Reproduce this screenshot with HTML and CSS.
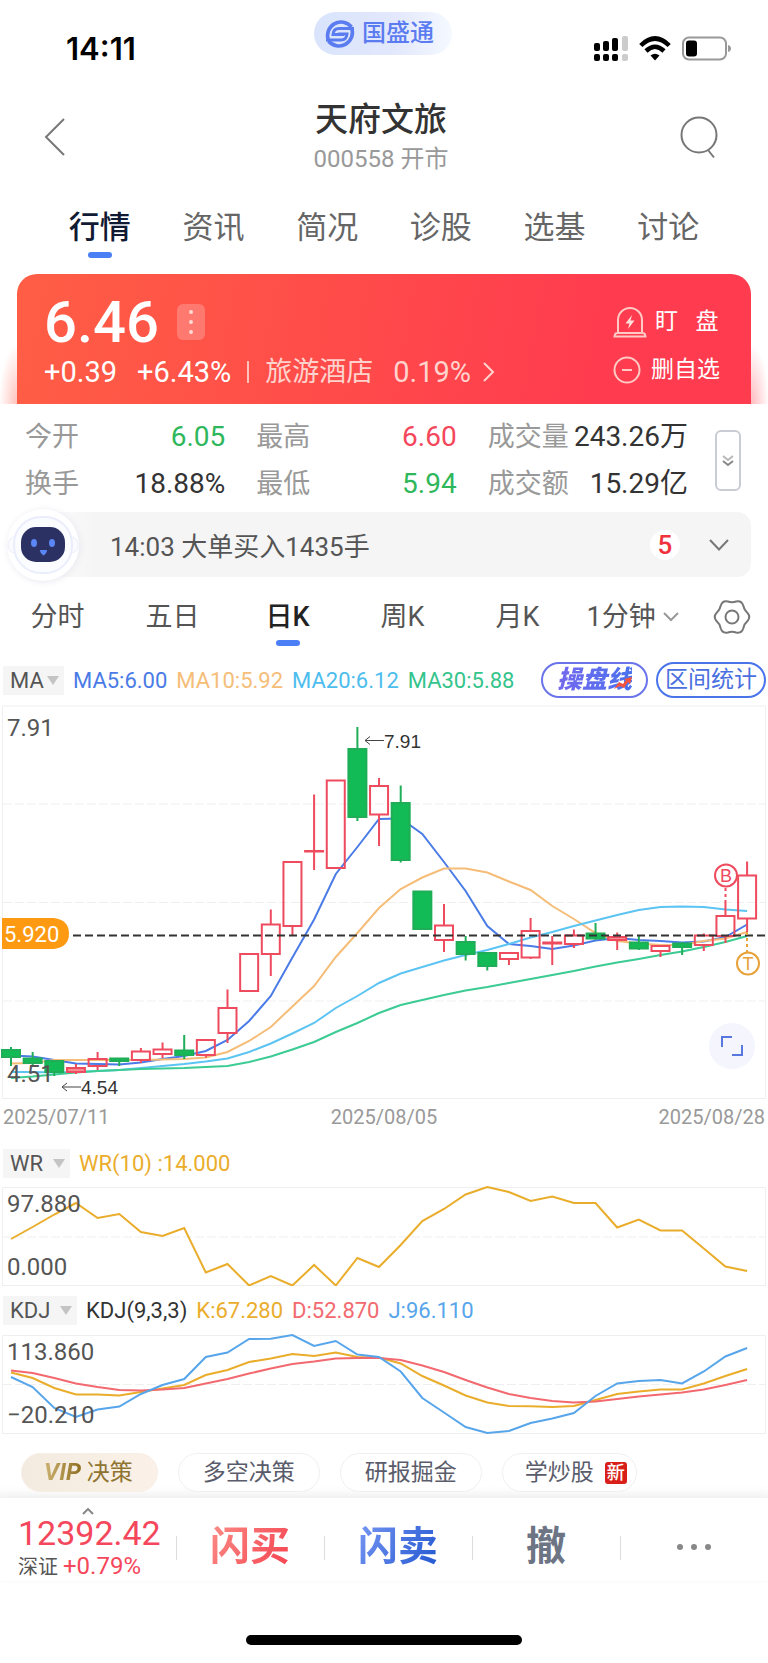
FILE: index.html
```html
<!DOCTYPE html>
<html lang="zh-CN">
  <head>
    <meta charset="utf-8" />
    <meta name="viewport" content="width=device-width, initial-scale=1" />
    <title>天府文旅 000558</title>
    <link rel="stylesheet" href="styles.css">
  </head>
  <body>
    <div class="status-bar">
      <span class="time">14:11</span>
      <div class="app-pill">
        <svg width="32" height="32" viewBox="0 0 32 32" fill="none" stroke="#5b7cf0">
          <path d="M4.500 22.500A13.500 13.500 0 0 1 27.500 9" stroke-width="3.600" />
          <path d="M27.500 9.500A13.500 13.500 0 0 1 4.500 23" stroke-width="3.600" />
          <path d="M30 10.500H15Q9.500 10.500 9 16.500H20" stroke-width="3" />
          <path d="M2 22H17Q22.500 22 23 16H14" stroke-width="3" />
        </svg>
        <span>国盛通</span>
      </div>
      <div class="status-icons">
        <svg width="34" height="26" viewBox="0 0 34 26">
          <rect x="0" y="7" width="6" height="8" rx="2" />
          <rect x="9" y="5" width="6" height="10" rx="2" />
          <rect x="18" y="2" width="6" height="13" rx="2" />
          <rect x="28" y="0" width="6" height="15" rx="2" fill="#ccc" />
          <rect x="0" y="18" width="6" height="7" rx="2" />
          <rect x="9" y="18" width="6" height="7" rx="2" />
          <rect x="18" y="18" width="6" height="7" rx="2" />
          <rect x="28" y="18" width="6" height="7" rx="2" fill="#ccc" />
        </svg>
        <svg width="32" height="26" viewBox="0 0 32 26" fill="none" stroke="#000" stroke-width="4.500">
          <path d="M1.800 9.500Q16-4.500 30.200 9.500" />
          <path d="M7 15Q16 6.500 25 15" />
          <path d="M16 24.500L11.500 19.500Q16 16 20.500 19.500Z" fill="#000" stroke="none" />
        </svg>
        <svg width="50" height="26" viewBox="0 0 50 26">
          <rect x="1" y="1.500" width="43" height="22" rx="6" fill="none" stroke="#999" stroke-width="2" />
          <rect x="4" y="4.500" width="11" height="16" rx="3" />
          <path d="M46 9Q49 10 49 12.500T46 16Z" fill="#999" />
        </svg>
      </div>
    </div>

    <header class="header">
      <button class="icon-btn back" aria-label="返回">
        <svg width="22" height="40" viewBox="0 0 22 40"><path d="M20 2L2 20L20 38" /></svg>
      </button>
      <div class="stock">
        <h1>天府文旅</h1>
        <p>000558 开市</p>
      </div>
      <button class="icon-btn search" aria-label="搜索">
        <svg width="38" height="44" viewBox="0 0 38 44"><circle cx="19" cy="20" r="17.500" /><path d="M28 35L34 42.500" /></svg>
      </button>
    </header>

    <nav class="tabs">
      <a href="#" class="active">行情</a>
      <a href="#">资讯</a>
      <a href="#">简况</a>
      <a href="#">诊股</a>
      <a href="#">选基</a>
      <a href="#">讨论</a>
    </nav>

    <section class="price-wrap">
      <div class="price-card">
        <div>
          <div class="price">
            <strong>6.46</strong>
            <button class="more-dots" aria-label="更多">
              <svg width="4" height="24" viewBox="0 0 4 24" fill="#ffd9d3"><circle cx="2" cy="2" r="2" /><circle cx="2" cy="12" r="2" /><circle cx="2" cy="22" r="2" /></svg>
            </button>
          </div>
          <div class="change">
            <span>+0.39</span>
            <span>+6.43%</span>
            <i></i>
            <a href="#" class="sector">
              <span>旅游酒店</span>
              <span>0.19%</span>
              <svg width="12" height="20" viewBox="0 0 12 20"><path d="M1 1L10 10L1 19" /></svg>
            </a>
          </div>
        </div>
        <div class="actions">
          <button>
            <svg width="34" height="32" viewBox="0 0 34 32"><path d="M5 27V14A12 12 0 0 1 29 14V27M4 27H30Q32 27 32.500 30.500H1.500Q2 27 4 27Z" /><path d="M19 9L12.500 17.500H16.500L15 23L21.500 14.500H17.500Z" fill="#ffe1dc" stroke="none" /></svg>
            <span>盯&ensp; 盘</span>
          </button>
          <button>
            <svg width="28" height="28" viewBox="0 0 28 28"><circle cx="14" cy="14" r="12.500" /><path d="M9 14H19" /></svg>
            <span>删自选</span>
          </button>
        </div>
      </div>
    </section>

    <section class="stats">
      <dl>
        <div><dt>今开</dt><dd class="down">6.05</dd></div>
        <div><dt>最高</dt><dd class="up">6.60</dd></div>
        <div><dt>成交量</dt><dd>243.26万</dd></div>
        <div><dt>换手</dt><dd>18.88%</dd></div>
        <div><dt>最低</dt><dd class="down">5.94</dd></div>
        <div><dt>成交额</dt><dd>15.29亿</dd></div>
      </dl>
      <button class="expand" aria-label="展开">
        <svg width="12" height="14" viewBox="0 0 12 14"><path d="M1 2L6 6L11 2" opacity=".6" /><path d="M1 7L6 11L11 7" /></svg>
      </button>
    </section>

    <section class="alert">
      <svg class="robot" width="74" height="74" viewBox="0 0 74 74">
        <circle cx="37" cy="37" r="36" fill="#fff" />
        <rect x="2" y="29" width="70" height="16" rx="7" fill="#fafaff" stroke="#eeeefb" />
        <rect x="8" y="9" width="58" height="56" rx="27" fill="#fbfcff" stroke="#eaedfc" stroke-width="2" />
        <rect x="15" y="19" width="44" height="35" rx="15" fill="#2c3163" />
        <ellipse cx="28" cy="35" rx="3" ry="4" fill="#5b86f5" />
        <ellipse cx="46" cy="35" rx="3" ry="4" fill="#5b86f5" />
        <path d="M34 42H41Q41 45 37.500 47.500Q34 45 34 42Z" fill="#5b86f5" />
      </svg>
      <p>14:03 大单买入1435手</p>
      <span class="count">5</span>
      <button class="icon-btn" aria-label="展开消息">
        <svg width="20" height="12" viewBox="0 0 20 12"><path d="M1 1L10 10.500L19 1" /></svg>
      </button>
    </section>

    <nav class="periods">
      <a href="#">分时</a>
      <a href="#">五日</a>
      <a href="#" class="active">日K</a>
      <a href="#">周K</a>
      <a href="#">月K</a>
      <span class="minute">
        <select aria-label="分钟周期"><option>1分钟</option></select>
        <svg width="16" height="10" viewBox="0 0 16 10"><path d="M1 1L8 8L15 1" /></svg>
      </span>
      <button class="icon-btn gear" aria-label="设置">
        <svg width="40" height="40" viewBox="0 0 40 40">
          <path d="M35.500 15.900Q39 20 35.500 24.100Q32.100 27 31.300 31.300Q29.500 36.900 24.100 35.500Q20 34 15.900 35.500Q10.500 36.900 8.700 31.300Q7.900 27 4.500 24.100Q1 20 4.500 15.900Q7.900 13 8.700 8.700Q10.500 3.100 15.900 4.500Q20 6 24.100 4.500Q29.500 3.100 31.300 8.700Q32.100 13 35.500 15.900Z" />
          <circle cx="20" cy="20" r="6.500" />
        </svg>
      </button>
    </nav>

    <div class="legend ma-row">
      <span class="picker ma"><select aria-label="主图指标"><option>MA</option></select></span>
      <span class="ma5">MA5:6.00</span>
      <span class="ma10">MA10:5.92</span>
      <span class="ma20">MA20:6.12</span>
      <span class="ma30">MA30:5.88</span>
      <div class="chart-btns">
        <button class="trade-line">
          <span>操盘线</span>
          <svg width="18" height="12" viewBox="0 0 18 12"><path d="M0 12L5 5L9 7L12 3L10 2L18 0L16 7L14 5L10 11L6 9Z" /></svg>
        </button>
        <button>区间统计</button>
      </div>
    </div>

    <div class="chart-box">
      <svg class="chart" viewBox="0 0 768 400">
        <g class="grid">
          <path d="M2.500 6H765.500V398.500H2.500Z" />
          <path d="M3 104H765M3 202.500H765M3 301H765" stroke-dasharray="9 3" />
        </g>
        <g id="ma-lines"></g>
        <g id="candles"></g>
        <path d="M73 235.500H766" stroke="#333" stroke-width="2" stroke-dasharray="8 4" />
        <path d="M2 218H54Q69 220 69 233.500T54 249H2Z" fill="#fd9a12" />
        <text class="tag" x="4" y="242">5.920</text>
        <text class="axis" x="7" y="36">7.91</text>
        <text class="axis" x="7" y="382">4.51</text>
        <g class="arrow">
          <path d="M384 40.500H365M370 36.500L365 40.500L370 44.500" />
          <path d="M81 387H62M67 383L62 387L67 391" />
        </g>
        <text class="note" x="384" y="48">7.91</text>
        <text class="note" x="81" y="394">4.54</text>
        <g class="mark buy">
          <path d="M725.500 188V202" stroke-dasharray="3 3" />
          <circle cx="726" cy="175.500" r="11" />
          <text x="726" y="182">B</text>
        </g>
        <g class="mark trade">
          <path d="M747 232V252" stroke-dasharray="3 3" />
          <circle cx="748" cy="263.500" r="11" />
          <text x="748" y="270">T</text>
        </g>
      </svg>
      <button class="fullscreen" aria-label="全屏">
        <svg width="22" height="20" viewBox="0 0 22 20"><path d="M1 11V1H11M11 19H21V9" /></svg>
      </button>
    </div>
    <div class="dates"><span>2025/07/11</span><span>2025/08/05</span><span>2025/08/28</span></div>

    <div class="legend wr-row">
      <span class="picker"><select aria-label="副图指标一"><option>WR</option></select></span>
      <span class="k">WR(10) :14.000</span>
    </div>
    <svg class="chart" viewBox="0 56 768 100">
      <path class="grid" d="M2.500 57.500H765.500V155.500H2.500Z" />
      <path class="grid" d="M3 107H765" stroke-dasharray="9 3" />
      <g id="wr-lines"></g>
      <text class="axis" x="7" y="82">97.880</text>
      <text class="axis" x="7" y="145">0.000</text>
    </svg>

    <div class="legend kdj-row">
      <span class="picker"><select aria-label="副图指标二"><option>KDJ</option></select></span>
      <span>KDJ(9,3,3)</span>
      <span class="k">K:67.280</span>
      <span class="d">D:52.870</span>
      <span class="j">J:96.110</span>
    </div>
    <svg class="chart" viewBox="0 203 768 102">
      <path class="grid" d="M2.500 205.500H765.500V303.500H2.500Z" />
      <path class="grid" d="M3 254.500H765" stroke-dasharray="9 3" />
      <g id="kdj-lines"></g>
      <text class="axis" x="7" y="230">113.860</text>
      <text class="axis" x="7" y="293">−20.210</text>
    </svg>

    <div class="tools">
      <a href="#" class="vip"><b>VIP</b> 决策</a>
      <a href="#">多空决策</a>
      <a href="#">研报掘金</a>
      <a href="#" class="learn">学炒股 <em>新</em></a>
    </div>

    <footer class="trade-bar">
      <a href="#" class="index">
        <svg width="12" height="7" viewBox="0 0 12 7"><path d="M1 6L6 1L11 6" /></svg>
        <strong>12392.42</strong>
        <span>深证 <b>+0.79%</b></span>
      </a>
      <button class="buy-btn"><span>闪买</span></button>
      <button class="sell-btn"><span>闪卖</span></button>
      <button class="cancel-btn"><span>撤</span></button>
      <button aria-label="更多">
        <svg width="34" height="6" viewBox="0 0 34 6" fill="#888"><circle cx="3" cy="3" r="3" /><circle cx="17" cy="3" r="3" /><circle cx="31" cy="3" r="3" /></svg>
      </button>
    </footer>
    <div class="home-bar"></div>

    <script>
      var START = 11;
      var STEP = 21.65;

      // [type, high, body top, body bottom, low], g = down, r = up, s = filled up
      var candles = [
        ["g", 347, 350, 357, 366], ["g", 352, 358.5, 363, 365], ["g", 361, 361, 372, 376],
        ["s", 364, 368, 372, 374], ["r", 352, 359, 366, 370], ["g", 358, 358.5, 361, 366],
        ["r", 348, 351.5, 360, 363], ["r", 342.5, 349.5, 354, 358], ["g", 335, 350.5, 355, 359],
        ["r", 340, 340, 355, 357.5], ["r", 289.5, 308, 333, 343], ["r", 254, 254, 291, 291],
        ["r", 209.5, 224.5, 254, 276], ["r", 162, 162, 226, 236], ["r", 94.5, 151, 151.5, 170],
        ["r", 80.5, 80.5, 168, 168], ["g", 27, 49, 117, 121], ["r", 78, 86, 114.5, 146],
        ["g", 85.5, 103, 160, 162.5], ["g", 191.5, 191.5, 229, 229], ["r", 204, 225.5, 240, 252],
        ["g", 236, 242, 254, 260.5], ["g", 252, 253, 266, 270.5], ["r", 253, 253, 259, 265],
        ["r", 218, 231, 257.5, 259], ["r", 236, 242.5, 243.5, 265], ["r", 229.5, 235.5, 244, 248],
        ["g", 223, 233.5, 238.5, 240], ["s", 232.5, 237, 240, 250], ["g", 236, 242.5, 248.5, 250],
        ["r", 246, 246, 251, 257], ["g", 242, 243.5, 247, 255], ["r", 233.5, 235.5, 245, 251],
        ["r", 202, 216, 236, 243], ["r", 161.5, 175.5, 218.5, 232]
      ];

      var ma5 = [355.5, 356.5, 360, 363.5, 364, 364.5, 362.5, 359, 356, 351, 340, 321, 296, 257.5, 219.5, 174, 147, 119, 118.5, 134, 162, 191, 226, 244, 246, 249, 245.5, 240.5, 238, 240, 241, 242.5, 241.5, 237, 224.5];
      var ma10 = [363.5, 363, 360, 360, 360, 360, 360, 359.5, 359, 357.5, 352, 341, 327, 306.5, 286, 257, 233, 208, 189, 177.5, 168.5, 168.5, 172.5, 181.5, 190, 206, 219, 233, 241, 243.5, 245, 245, 241, 238.5, 232];
      var ma20 = [372, 372, 372.5, 372, 371, 370, 368, 366, 364, 361.5, 358.5, 352, 343.5, 333.5, 323, 308, 296, 283, 273.5, 267, 260.5, 255, 250, 244, 237.5, 232, 226, 220.5, 215, 210, 207, 206.5, 207, 209.5, 211];
      var ma30 = [378, 376.5, 374.5, 372.5, 371, 370, 369, 368.5, 368, 367, 366, 362, 356.5, 349.5, 342, 332, 323, 313, 305, 300, 295, 290.5, 287, 283, 279, 275, 271, 266.5, 262.5, 259, 255, 251.5, 247, 242, 236];
      var wr = [109, 97, 84.5, 73, 88, 84, 102, 106, 98, 142.5, 134, 155.5, 146, 155.5, 135, 155.5, 128, 137, 115, 91, 79, 64.5, 57, 62, 71, 66.5, 73, 73, 97.5, 89.5, 100.5, 100.5, 118.5, 136.5, 141];
      var k = [242.5, 248, 258, 264.5, 264.5, 265.5, 262, 258.5, 255, 245, 240, 232, 228.5, 224, 226, 222.5, 227, 227.5, 233.5, 246, 255.5, 265.5, 272.5, 276, 276.3, 277, 276, 270, 264, 261.5, 259.5, 259.5, 253.5, 246, 239];
      var d = [240.5, 243, 248, 253.5, 257, 260, 260.5, 259.5, 258, 253.5, 249, 243.5, 238.5, 234, 231.5, 228.5, 228, 228, 230, 235.5, 242, 250, 257.5, 264, 268, 271, 272.5, 271.5, 269, 266.5, 264.5, 262.5, 259.5, 255, 250];
      var j = [247, 257, 278, 287, 279.5, 276.5, 264, 255, 249, 227, 222.5, 209, 208.7, 205, 216, 211, 224.5, 227, 241.5, 268, 282.5, 297, 303, 301, 293, 288.5, 283, 266, 253.5, 251, 250, 253.5, 241.5, 226.5, 218];

      function add(parent, tag, attrs) {
        var el = document.createElementNS("http://www.w3.org/2000/svg", tag);
        for (var name in attrs) {
          el.setAttribute(name, attrs[name]);
        }
        document.getElementById(parent).appendChild(el);
      }

      function line(parent, values, color) {
        var points = values.map(function (y, i) {
          return (START + i * STEP).toFixed(1) + "," + y;
        });
        add(parent, "polyline", { points: points.join(" "), stroke: color });
      }

      line("ma-lines", ma5, "#4a7be6");
      line("ma-lines", ma10, "#f5bd78");
      line("ma-lines", ma20, "#5cc4f2");
      line("ma-lines", ma30, "#3bcb93");
      line("wr-lines", wr, "#eaad2b");
      line("kdj-lines", k, "#eaad2b");
      line("kdj-lines", d, "#f2696f");
      line("kdj-lines", j, "#57a5ea");

      candles.forEach(function (c, i) {
        var x = START + i * STEP;
        add("candles", "path", {
          class: "candle-" + c[0],
          d: "M" + x + " " + c[1] + "V" + c[2] + "M" + x + " " + c[3] + "V" + c[4] +
            "M" + (x - 9) + " " + c[2] + "H" + (x + 9) + "V" + c[3] + "H" + (x - 9) + "Z"
        });
      });
    </script>
  </body>
</html>
```
FILE: styles.css
```css
* {
  box-sizing: border-box;
}

body {
  margin: 0;
  background: #fff;
  color: #333;
  font-family: Roboto, "Noto Sans CJK SC", sans-serif;
  font-size: 22px;
}

h1, p, dl, dd {
  margin: 0;
}

a {
  color: inherit;
  text-decoration: none;
}

button, select {
  padding: 0;
  border: none;
  background: none;
  color: inherit;
  font: inherit;
  cursor: pointer;
}

select {
  appearance: none;
}

svg {
  display: block;
  flex: none;
}

.status-bar {
  display: grid;
  grid-template-columns: 1fr auto 1fr;
  align-items: start;
  padding: 12px 36px 5px 66px;
}

.time {
  padding-top: 19px;
  color: #000;
  font-family: Inter, sans-serif;
  font-size: 31px;
  font-weight: 600;
  line-height: 36px;
}

.app-pill {
  display: flex;
  align-items: center;
  gap: 6px;
  margin-right: 32px;
  padding: 0 18px 0 10px;
  border-radius: 22px;
  background: linear-gradient(90deg, #d9e4fc, #e3e8fc 60%, #f5f9ff);
  color: #5b7cf0;
  font-size: 24px;
  font-weight: 500;
  line-height: 43px;
}

.status-icons {
  display: flex;
  justify-content: flex-end;
  gap: 11px;
  padding-top: 24px;
}

.header {
  display: grid;
  grid-template-columns: 1fr auto 1fr;
  align-items: center;
  padding: 28px 50px 0 44px;
}

.icon-btn svg {
  fill: none;
  stroke: #777;
  stroke-width: 2;
}

.back {
  justify-self: start;
}

.search {
  justify-self: end;
}

.stock {
  text-align: center;
}

.stock h1 {
  font-size: 33px;
  font-weight: 500;
  line-height: 40px;
}

.stock p {
  margin-top: 4px;
  color: #999;
  font-size: 24px;
  line-height: 30px;
}

.tabs {
  display: grid;
  grid-template-columns: repeat(6, 1fr);
  margin-top: 34px;
  padding: 0 43px;
  color: #666;
  font-size: 31px;
  line-height: 40px;
  text-align: center;
}

.tabs a {
  position: relative;
  padding-bottom: 10px;
}

.tabs .active {
  color: #111a33;
  font-weight: 500;
}

.tabs .active::after,
.periods .active::after {
  content: "";
  position: absolute;
  bottom: 0;
  left: 50%;
  width: 24px;
  height: 6px;
  margin-left: -12px;
  border-radius: 3px;
  background: #4a7ff5;
}

.price-wrap {
  margin-top: 16px;
  padding: 0 17px;
  background:
    radial-gradient(ellipse 18px 60px at 17px 100%, #ffc3bb, transparent),
    radial-gradient(ellipse 18px 60px at calc(100% - 17px) 100%, #ffb9bf, transparent);
}

.price-card {
  display: flex;
  justify-content: space-between;
  padding: 18px 31px 14px 27px;
  border-radius: 20px 20px 0 0;
  background: linear-gradient(100deg, #ff5e45, #ff4b4a 45%, #ff3b4f 80%);
  color: #fff;
}

.price {
  display: flex;
  align-items: center;
  gap: 18px;
}

.price strong {
  font-size: 58px;
  font-weight: 500;
  line-height: 60px;
}

.more-dots {
  padding: 6px 12px;
  border-radius: 6px;
  background: rgba(255, 255, 255, 0.22);
}

.change {
  display: flex;
  align-items: center;
  gap: 20px;
  margin-top: 2px;
  font-size: 29px;
  line-height: 36px;
}

.change i {
  width: 2px;
  height: 22px;
  margin: 0 -4px;
  background: #ffc2ba;
}

.sector {
  display: flex;
  align-items: center;
  gap: 12px;
  color: #ffd3cd;
}

.sector span:first-child {
  margin-right: 8px;
  font-size: 27px;
}

.sector svg {
  fill: none;
  stroke: #ffd3cd;
  stroke-width: 2;
}

.actions {
  display: flex;
  flex-direction: column;
  gap: 10px;
  padding-top: 11px;
}

.actions button {
  display: flex;
  align-items: center;
  gap: 8px;
  font-size: 23px;
  line-height: 38px;
}

.actions button:last-child {
  gap: 10px;
}

.actions svg {
  fill: none;
  stroke: #ffc9c4;
  stroke-width: 2;
}

.stats {
  display: flex;
  align-items: center;
  gap: 27px;
  padding: 13px 27px 8px 25px;
  font-size: 28px;
  line-height: 40px;
}

.stats dl {
  display: grid;
  flex: 1;
  grid-template-columns: repeat(3, 1fr);
  gap: 7px 31px;
}

.stats dl div {
  display: flex;
  justify-content: space-between;
  white-space: nowrap;
}

.stats dt {
  color: #999;
  font-size: 27px;
}

.up {
  color: #f5475b;
}

.down {
  color: #2fb75c;
}

.expand {
  display: flex;
  align-items: center;
  justify-content: center;
  width: 26px;
  height: 61px;
  border: 2px solid #c9ccd2;
  border-radius: 6px;
}

.expand svg {
  fill: none;
  stroke: #888;
  stroke-width: 2;
}

.alert {
  display: flex;
  align-items: center;
  height: 65px;
  margin: 0 17px;
  padding-right: 22px;
  border-radius: 14px;
  background: linear-gradient(90deg, #fff, #f5f5f5 80px);
  color: #555;
  font-size: 26px;
}

.robot {
  margin: 0 30px 0 -11px;
  filter: drop-shadow(1px 1px 3px #e8e8f0);
}

.count {
  width: 30px;
  margin-left: auto;
  margin-right: 29px;
  border-radius: 15px;
  background: #fff;
  color: #f0323c;
  font-weight: 500;
  line-height: 30px;
  text-align: center;
}

.periods {
  display: grid;
  grid-template-columns: repeat(6, 1fr) 78px;
  align-items: start;
  margin-top: 20px;
  color: #555;
  font-size: 27px;
  line-height: 40px;
  text-align: center;
}

.periods a {
  position: relative;
  padding-bottom: 9px;
}

.periods .active {
  color: #222;
  font-weight: 500;
}

.minute {
  display: flex;
  align-items: center;
  justify-content: center;
  gap: 6px;
}

.minute svg {
  fill: none;
  stroke: #999;
  stroke-width: 2;
}

.gear {
  justify-self: end;
  padding-right: 16px;
}

.legend {
  display: flex;
  align-items: center;
  gap: 9px;
  padding-left: 3px;
  line-height: 29px;
}

.picker {
  position: relative;
  background: #f5f5f5;
  color: #555;
}

.picker select {
  padding: 0 26px 0 7px;
}

.picker.ma select {
  padding-right: 20px;
}

.picker::after {
  content: "";
  position: absolute;
  top: 10px;
  right: 5px;
  border: 6px solid transparent;
  border-top: 9px solid #c4c4c4;
  border-bottom: none;
  pointer-events: none;
}

.ma-row {
  margin-top: 16px;
}

.ma5 {
  color: #4a7be6;
}

.ma10 {
  color: #f5bd78;
}

.ma20 {
  color: #4dbdee;
}

.ma30 {
  color: #35c48c;
}

.chart-btns {
  display: flex;
  gap: 8px;
  margin-left: auto;
  padding-right: 2px;
}

.chart-btns button {
  padding: 0 7px;
  border: 2px solid #4a74ea;
  border-radius: 18px;
  color: #4a6fe0;
  font-size: 23px;
  line-height: 32px;
  white-space: nowrap;
}

.chart-btns .trade-line {
  position: relative;
  padding: 0 14px;
  border-color: #6a74ea;
  font-size: 25px;
  font-style: italic;
  font-weight: 900;
}

.trade-line span {
  background: linear-gradient(90deg, #7468ee, #4a72ee);
  background-clip: text;
  color: transparent;
}

.trade-line svg {
  position: absolute;
  right: 14px;
  bottom: 7px;
  fill: #f5533d;
}

.chart {
  width: 100%;
  fill: none;
  stroke-width: 2;
}

.chart-box {
  position: relative;
  margin-top: 2px;
}

.grid {
  stroke: #efefef;
  stroke-width: 1;
}

.candle-g {
  fill: #12bb55;
  stroke: #1fae57;
}

.candle-r {
  stroke: #ee4b5e;
}

.candle-s {
  fill: #f58a95;
  stroke: #ee4b5e;
}

.axis {
  fill: #555;
  font-size: 24px;
}

.tag {
  fill: #fff;
  font-size: 22px;
}

.note {
  fill: #333;
  font-family: "Liberation Sans", sans-serif;
  font-size: 19px;
}

.arrow {
  stroke: #444;
  stroke-width: 1;
}

.mark circle {
  fill: #fff;
}

.mark text {
  stroke: none;
  font-family: "Liberation Sans", sans-serif;
  font-size: 18px;
  text-anchor: middle;
}

.buy {
  stroke: #ee4b5e;
}

.buy text {
  fill: #ee4b5e;
}

.trade {
  stroke: #e8a23a;
}

.trade text {
  fill: #e8a23a;
}

.fullscreen {
  position: absolute;
  right: 13px;
  bottom: 31px;
  display: flex;
  align-items: center;
  justify-content: center;
  width: 46px;
  height: 46px;
  border-radius: 50%;
  background: #f4f5fd;
}

.fullscreen svg {
  fill: none;
  stroke: #5878e0;
  stroke-width: 2;
}

.dates {
  display: flex;
  justify-content: space-between;
  margin-top: 5px;
  padding: 0 3px;
  color: #999;
  font-size: 20px;
  line-height: 24px;
}

.wr-row {
  margin: 20px 0 8px;
}

.kdj-row {
  margin: 10px 0 8px;
}

.k {
  color: #eaad2b;
}

.d {
  color: #f2696f;
}

.j {
  color: #57a5ea;
}

.tools {
  display: flex;
  gap: 20px;
  padding: 18px 21px 6px;
  background: linear-gradient(#fff 80%, #f7f7f7);
  color: #5a5c6b;
  font-size: 23px;
  line-height: 37px;
}

.tools a {
  padding: 0 24px;
  border: 1px solid #f1eff2;
  border-radius: 20px;
  background: #fff;
}

.tools .vip {
  padding: 0 24px 0 22px;
  border-color: #f8eee4;
  background: linear-gradient(90deg, #f3ebdf, #fbf1e8);
  color: #8f7431;
}

.vip b {
  font-size: 24px;
  font-style: italic;
  font-weight: 700;
  background: linear-gradient(90deg, #cdb272, #8f6f22);
  background-clip: text;
  color: transparent;
}

.tools .learn {
  display: flex;
  align-items: center;
  gap: 11px;
  padding: 0 9px 0 22px;
}

.learn em {
  padding: 0 2px;
  border-radius: 3px;
  background: #d91f1a;
  color: #fff;
  font-size: 18px;
  font-style: normal;
  font-weight: 500;
  line-height: 22px;
}

.trade-bar {
  display: grid;
  grid-template-columns: 176px repeat(4, 1fr);
  box-shadow: 0 -2px 6px #f0f0f0;
}

.index {
  display: flex;
  flex-direction: column;
  padding: 10px 0 0 18px;
  color: #555;
  font-size: 20px;
  line-height: 28px;
}

.index svg {
  margin-left: 64px;
  fill: none;
  stroke: #888;
  stroke-width: 2;
}

.index strong {
  color: #f5475b;
  font-size: 34px;
  font-weight: 400;
  line-height: 37px;
}

.index b {
  color: #f5475b;
  font-size: 24px;
  font-weight: 400;
}

.trade-bar button {
  position: relative;
  display: flex;
  align-items: center;
  justify-content: center;
  padding-top: 14px;
  font-size: 40px;
  font-weight: 700;
  line-height: 54px;
}

.trade-bar button::before {
  content: "";
  position: absolute;
  top: 38px;
  left: 0;
  width: 1px;
  height: 24px;
  background: #ddd;
}

.buy-btn span,
.sell-btn span {
  background: linear-gradient(120deg, #fb8d86, #f5414f);
  background-clip: text;
  color: transparent;
}

.sell-btn span {
  background-image: linear-gradient(120deg, #7897f3, #1f55d0);
}

.cancel-btn {
  color: #6d7585;
}

.home-bar {
  width: 36%;
  height: 10px;
  margin: 54px auto 17px;
  border-radius: 5px;
  background: #000;
}
```
